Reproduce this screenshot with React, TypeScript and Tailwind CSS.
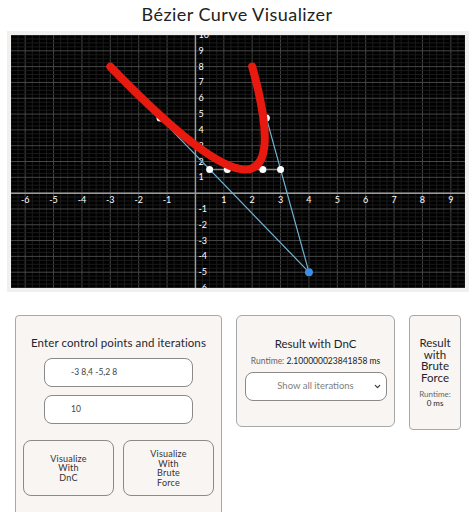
import { ChevronDown } from "lucide-react";

const W = 454;
const H = 253;
const UX = W / 16; // x range -6.5 .. 9.5
const UY = H / 16; // y range -6 .. 10
const X0 = 6.5 * UX;
const Y0 = 10 * UY;

const sx = (x: number) => X0 + x * UX;
const sy = (y: number) => Y0 - y * UY;

const minorX = Array.from({ length: 16 * 4 + 1 }, (_, i) => -6.5 + i * 0.25);
const minorY = Array.from({ length: 16 * 4 + 1 }, (_, i) => -6 + i * 0.25);
const xTicks = [-6, -5, -4, -3, -2, -1, 1, 2, 3, 4, 5, 6, 7, 8, 9];
const yTicks = [-5, -4, -3, -2, -1, 1, 2, 3, 4, 5, 6, 7, 8, 9];

const mids: [number, number][] = [
  [-1.25, 4.75],
  [0.5, 1.5],
  [1.125, 1.5],
  [1.75, 1.5],
  [2.375, 1.5],
  [3, 1.5],
  [2.5, 4.75],
];

function Chart() {
  return (
    <svg width={W} height={H} className="block bg-black">
      {minorX.map((x) => (
        <line
          key={"mx" + x}
          x1={sx(x)}
          x2={sx(x)}
          y1={0}
          y2={H}
          stroke={Number.isInteger(x) ? "#474747" : "#1b1b1b"}
          strokeWidth={1}
        />
      ))}
      {minorY.map((y) => (
        <line
          key={"my" + y}
          y1={sy(y)}
          y2={sy(y)}
          x1={0}
          x2={W}
          stroke={Number.isInteger(y) ? "#474747" : "#1b1b1b"}
          strokeWidth={1}
        />
      ))}
      <line x1={sx(0)} x2={sx(0)} y1={0} y2={H} stroke="#9a9a9a" strokeWidth={1.5} />
      <line y1={sy(0)} y2={sy(0)} x1={0} x2={W} stroke="#9a9a9a" strokeWidth={1.5} />
      {xTicks.map((x) => (
        <text
          key={"tx" + x}
          x={sx(x)}
          y={sy(0) + 10}
          fill="#fff"
          fontSize={9}
          textAnchor="middle"
          fontFamily="Lato, sans-serif"
        >
          {x}
        </text>
      ))}
      {yTicks.map((y) => (
        <text
          key={"ty" + y}
          x={sx(0) + 3}
          y={sy(y) + 3}
          fill="#fff"
          fontSize={9}
          fontFamily="Lato, sans-serif"
        >
          {y}
        </text>
      ))}
      {/* labels at the chart edges, half cut off */}
      <text x={sx(0) + 3} y={3} fill="#fff" fontSize={9} fontFamily="Lato, sans-serif">10</text>
      <text x={sx(0) + 3} y={H + 3} fill="#fff" fontSize={9} fontFamily="Lato, sans-serif">-6</text>
      <polyline
        points={`${sx(-3)},${sy(8)} ${sx(4)},${sy(-5)} ${sx(2)},${sy(8)}`}
        fill="none"
        stroke="#6fb3d2"
        strokeWidth={1.2}
      />
      <line x1={sx(0.5)} y1={sy(1.5)} x2={sx(3)} y2={sy(1.5)} stroke="#8a8a8a" strokeWidth={1.5} />
      {mids.map(([x, y]) => (
        <circle key={x + "," + y} cx={sx(x)} cy={sy(y)} r={3.5} fill="#fff" />
      ))}
      <path
        d={`M ${sx(-3)} ${sy(8)} Q ${sx(4)} ${sy(-5)} ${sx(2)} ${sy(8)}`}
        fill="none"
        stroke="#e8190f"
        strokeWidth={8}
        strokeLinecap="round"
      />
      <circle cx={sx(4)} cy={sy(-5)} r={4} fill="#3c8fe6" />
    </svg>
  );
}

export default function App() {
  return (
    <div className="w-[474px] h-[512px] overflow-hidden bg-white text-[#1f2530]" style={{ fontFamily: "Lato, 'Noto Sans', sans-serif" }}>
      <h1 className="text-center text-[18px] leading-[26px] pt-px tracking-wide text-[#222]">Bézier Curve Visualizer</h1>
      <div className="mx-[7px] mt-[4px] p-[4px] bg-[#f2f0ee] w-[462px]">
        <Chart />
      </div>

      <div className="flex items-start gap-[14px] pl-[15px] mt-[23px]">
        <div className="w-[207px] h-[220px] shrink-0 bg-[#f8f5f3] border border-[#a8a8a8] rounded-[4px] flex flex-col items-center pt-[19px]">
          <div className="text-[11.5px] leading-[16px] tracking-[0.1px]">Enter control points and iterations</div>
          <div className="mt-[7px] w-[149px] h-[29px] bg-white border border-[#8a8a8a] rounded-[8px] flex items-center pl-[26px] text-[8.5px] text-[#444]">
            -3 8,4 -5,2 8
          </div>
          <div className="mt-[8px] w-[149px] h-[29px] bg-white border border-[#8a8a8a] rounded-[8px] flex items-center pl-[26px] text-[8.5px] text-[#444]">
            10
          </div>
          <div className="mt-[16px] flex gap-[9px]">
            <div className="w-[91px] h-[56px] border border-[#8a8a8a] rounded-[8px] flex items-center justify-center text-center text-[9px] leading-[9.5px] tracking-[0.2px] text-[#333]">
              Visualize
              <br />
              With
              <br />
              DnC
            </div>
            <div className="w-[91px] h-[56px] border border-[#8a8a8a] rounded-[8px] flex items-center justify-center text-center text-[9px] leading-[9.5px] tracking-[0.2px] text-[#333]">
              Visualize
              <br />
              With
              <br />
              Brute
              <br />
              Force
            </div>
          </div>
        </div>

        <div className="w-[159px] h-[112px] shrink-0 bg-[#f8f5f3] border border-[#a8a8a8] rounded-[6px] flex flex-col items-center pt-[20px]">
          <div className="text-[11.5px] leading-[16px]">Result with DnC</div>
          <div className="mt-[3px] text-[8.5px] leading-[12px]">
            <span className="text-[#666]">Runtime: </span>
            <span className="text-[#222]">2.100000023841858 ms</span>
          </div>
          <div className="mt-[5px] w-[142px] h-[29px] bg-white border border-[#8a8a8a] rounded-[8px] flex items-center relative">
            <span className="flex-1 text-center text-[9.5px] text-[#808080]">Show all iterations</span>
            <ChevronDown size={9} strokeWidth={3} className="absolute right-[4px] text-[#333]" />
          </div>
        </div>

        <div className="w-[52px] h-[115px] shrink-0 bg-[#f8f5f3] border border-[#a8a8a8] rounded-[4px] flex flex-col items-center pt-[21px] text-center">
          <div className="text-[11.5px] leading-[11.5px]">
            Result
            <br />
            with
            <br />
            Brute
            <br />
            Force
          </div>
          <div className="mt-[7px] text-[8px] leading-[9px]">
            <span className="text-[#666]">Runtime:</span>
            <br />
            <span className="text-[#222]">0 ms</span>
          </div>
        </div>
      </div>
    </div>
  );
}
